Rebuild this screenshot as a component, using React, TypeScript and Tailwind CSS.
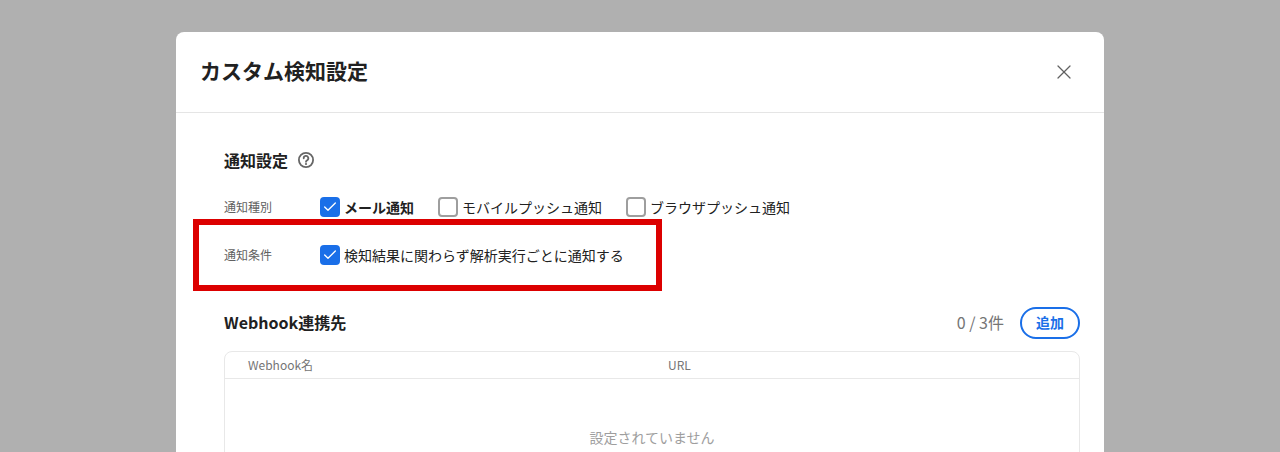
import { X, Check } from 'lucide-react';

const font = { fontFamily: '"Noto Sans CJK JP", "Noto Sans", sans-serif' };

const CheckItem = ({ label, checked, bold }: { label: string; checked?: boolean; bold?: boolean }) => (
  <label className="flex items-center gap-[4px]">
    {checked ? (
      <span className="w-5 h-5 rounded-[4px] bg-[#1a6fe8] flex items-center justify-center">
        <Check size={16} strokeWidth={2} className="text-white" />
      </span>
    ) : (
      <span className="w-5 h-5 rounded-[4px] border-2 border-[#9e9e9e] bg-white" />
    )}
    <span className={`text-[14px] leading-5 text-[#212121] ${bold ? 'font-bold' : ''}`}>{label}</span>
  </label>
);

const App = () => {
  return (
    <div className="relative h-[452px] overflow-hidden bg-[#b0b0b0] flex justify-center pt-8" style={font}>
      <div className="w-[928px] h-[600px] shrink-0 bg-white rounded-[8px]">
        <div className="h-[81px] px-6 flex items-center justify-between border-b border-[#e5e5e5]">
          <h1 className="text-[21px] leading-[30px] -mt-[4px] font-bold text-[#212121]">カスタム検知設定</h1>
          <button className="w-6 h-6 mr-1 flex items-center justify-center text-[#616161]">
            <X size={24} strokeWidth={1.25} />
          </button>
        </div>

        <div className="pl-12 pr-6 pt-[35px]">
          <div className="flex items-center gap-[10px] h-6">
            <h2 className="text-[16px] font-bold text-[#212121]">通知設定</h2>
            <svg width="16" height="16" viewBox="0 0 16 16" fill="none" className="text-[#666666]">
              <circle cx="8" cy="8" r="7.1" stroke="currentColor" strokeWidth="1.8" />
              <path d="M5.7 6.3a2.3 2.3 0 1 1 3.5 1.9c-.8.5-1.2.8-1.2 1.6" stroke="currentColor" strokeWidth="1.8" strokeLinecap="round" />
              <circle cx="8" cy="12" r="1.1" fill="currentColor" />
            </svg>
          </div>

          <div className="flex items-center h-5 mt-[25px]">
            <span className="w-24 text-[12px] text-[#616161]">通知種別</span>
            <div className="flex gap-[24px]">
              <CheckItem label="メール通知" checked bold />
              <CheckItem label="モバイルプッシュ通知" />
              <CheckItem label="ブラウザプッシュ通知" />
            </div>
          </div>

          <div className="flex items-center h-5 mt-[28px]">
            <span className="w-24 text-[12px] text-[#616161]">通知条件</span>
            <CheckItem label="検知結果に関わらず解析実行ごとに通知する" checked />
          </div>

          <div className="flex items-center justify-between mt-[42px] h-8">
            <h2 className="text-[16px] leading-[22px] -mt-[2px] font-bold text-[#212121]">Webhook連携先</h2>
            <div className="flex items-center gap-4">
              <span className="text-[16px] leading-[22px] -mt-[2px] text-[#757575]">0 / 3件</span>
              <button className="w-[60px] h-8 pb-[2px] rounded-full border-2 border-[#1a6fe8] text-[14px] font-bold text-[#1a6fe8]">追加</button>
            </div>
          </div>

          <div className="mt-3 border border-[#e8e8e8] rounded-[8px] h-[200px]">
            <div className="h-[27px] flex items-center border-b border-[#e8e8e8] text-[12px] text-[#757575]">
              <span className="w-[443px] pl-[23px]">Webhook名</span>
              <span>URL</span>
            </div>
            <p className="mt-[48px] text-center text-[14px] text-[#9e9e9e]">設定されていません</p>
          </div>
        </div>
      </div>

      {/* annotation frame drawn on top of the modal */}
      <div className="absolute left-[193px] top-[219px] w-[469px] h-[72px] border-[6px] border-[#dc0000]" />
    </div>
  );
};

export default App;
